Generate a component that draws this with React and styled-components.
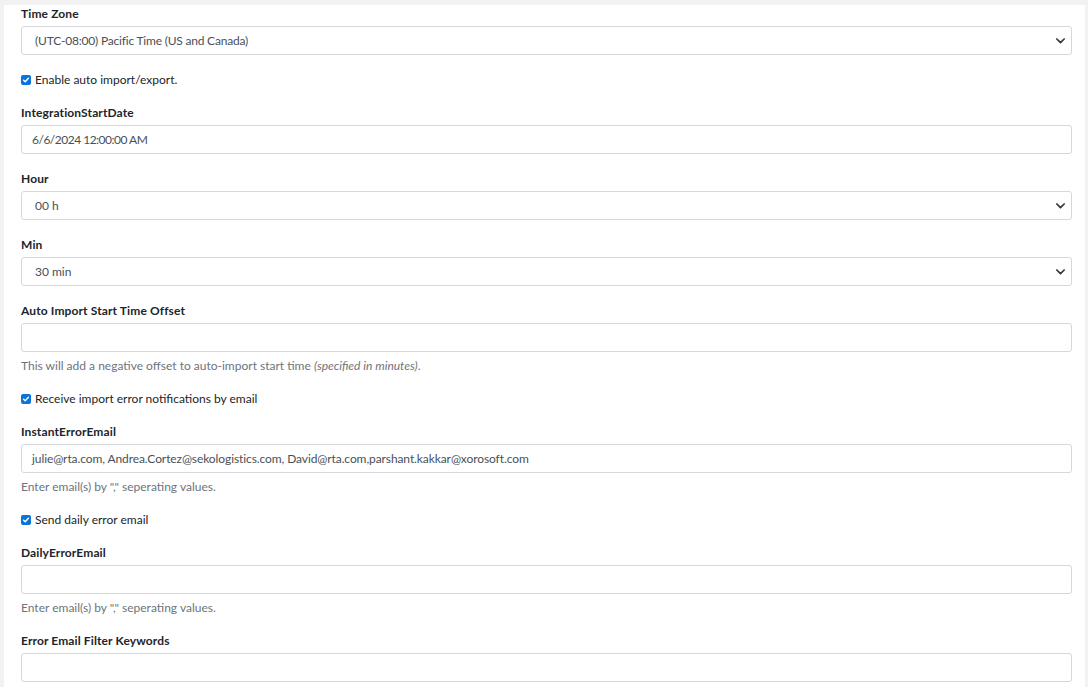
import React from "react";
import styled, { createGlobalStyle } from "styled-components";

const Global = createGlobalStyle`
  html, body { margin: 0; padding: 0; background: #f2f2f2; }
  body { font-family: Lato, "Open Sans", sans-serif; font-size: 12px; color: #212529; }
  * { box-sizing: border-box; }
`;

const Page = styled.div`
  padding: 5px 3px 0 4px;
  min-height: 687px;
`;

const Panel = styled.div`
  background: #fff;
  padding: 1px 13px 10px 17px;
  display: flex;
  flex-direction: column;
  gap: 17px;
  min-height: 682px;
`;

const Group = styled.div`
  display: flex;
  flex-direction: column;
`;

const Label = styled.label`
  font-weight: 700;
  line-height: 16px;
  margin-bottom: 4px;
  letter-spacing: 0.12px;
  color: #212529;
`;

const Control = styled.div`
  height: 29px;
  border: 1px solid #d4d8dc;
  border-radius: 3px;
  background: #fff;
  display: flex;
  align-items: center;
  padding: 0 5px 0 ${(p) => p.$pad}px;
  color: #495057;
  justify-content: space-between;
`;

const Value = styled.span`
  white-space: nowrap;
  letter-spacing: ${(p) => p.$ls || 0}px;
`;

const Help = styled.div`
  margin-top: 6px;
  line-height: 16px;
  color: #6c757d;
`;

const CheckRow = styled.label`
  display: flex;
  align-items: center;
  gap: 4px;
  line-height: 16px;
  color: #212529;
`;

const Box = styled.span`
  width: 10px;
  height: 10px;
  border-radius: 2px;
  background: #0a74da;
  display: inline-flex;
  align-items: center;
  justify-content: center;
`;

const Chevron = () => (
  <svg width="11" height="8" viewBox="0 0 16 12">
    <path d="M2.5 3l5.5 5.5 5.5-5.5" fill="none" stroke="#343a40" strokeWidth="2.6" strokeLinecap="round" strokeLinejoin="round" />
  </svg>
);

const Check = ({ children }) => (
  <CheckRow>
    <Box>
      <svg width="8" height="8" viewBox="0 0 10 10">
        <path d="M2 5.2l2 2 4-4.4" fill="none" stroke="#fff" strokeWidth="1.7" strokeLinecap="round" strokeLinejoin="round" />
      </svg>
    </Box>
    {children}
  </CheckRow>
);

const Field = ({ label, value, select, help, ls }) => (
  <Group>
    <Label>{label}</Label>
    <Control $pad={select ? 13 : 10}>
      <Value $ls={ls}>{value}</Value>
      {select && <Chevron />}
    </Control>
    {help && <Help>{help}</Help>}
  </Group>
);

const emailHelp = 'Enter email(s) by "," seperating values.';

export default function App() {
  return (
    <>
      <Global />
      <Page>
        <Panel>
          <Field label="Time Zone" value="(UTC-08:00) Pacific Time (US and Canada)" select ls={-0.2} />
          <Check>Enable auto import/export.</Check>
          <Field label="IntegrationStartDate" value="6/6/2024 12:00:00 AM" ls={-0.5} />
          <Field label="Hour" value="00 h" select />
          <Field label="Min" value="30 min" select />
          <Field
            label="Auto Import Start Time Offset"
            value=""
            help={
              <>
                This will add a negative offset to auto-import start time <i>(specified in minutes)</i>.
              </>
            }
          />
          <Check>Receive import error notifications by email</Check>
          <Field
            label="InstantErrorEmail"
            ls={-0.09}
            value="julie@rta.com, Andrea.Cortez@sekologistics.com, David@rta.com,parshant.kakkar@xorosoft.com"
            help={emailHelp}
          />
          <Check>Send daily error email</Check>
          <Field label="DailyErrorEmail" value="" help={emailHelp} />
          <Field label="Error Email Filter Keywords" value="" />
        </Panel>
      </Page>
    </>
  );
}
